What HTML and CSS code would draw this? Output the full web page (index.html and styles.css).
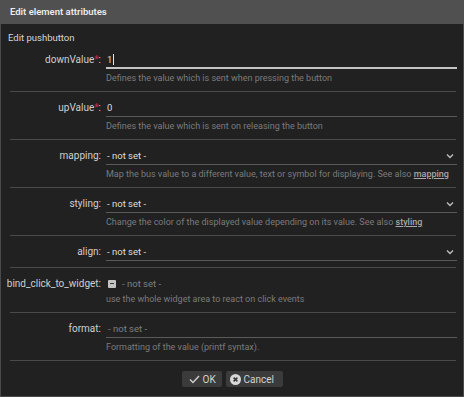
FILE: index.html
```html
<!DOCTYPE html>
<html>
<head>
<meta charset="utf-8">
<link rel="stylesheet" href="styles.css">
</head>
<body>
<div class="dialog">
  <div class="titlebar">Edit element attributes</div>
  <div class="content">
    <div class="heading">Edit pushbutton</div>
    <div class="rows">
      <div class="row">
        <div class="label"><span>downValue<span class="req">*</span>:</span></div>
        <div class="field">
          <div class="input focus"><span class="val">1</span><span class="caret"></span></div>
          <div class="desc">Defines the value which is sent when pressing the button</div>
        </div>
      </div>
      <div class="row">
        <div class="label"><span>upValue<span class="req">*</span>:</span></div>
        <div class="field">
          <div class="input"><span class="val">0</span></div>
          <div class="desc">Defines the value which is sent on releasing the button</div>
        </div>
      </div>
      <div class="row">
        <div class="label"><span>mapping:</span></div>
        <div class="field">
          <div class="input select"><span class="val">- not set -</span><svg class="chev" width="8" height="6" viewBox="0 0 8 6"><polyline points="1,1.5 4,4.5 7,1.5" fill="none" stroke="#bdbdbd" stroke-width="1.4"/></svg></div>
          <div class="desc">Map the bus value to a different value, text or symbol for displaying. See also <span class="link">mapping</span></div>
        </div>
      </div>
      <div class="row">
        <div class="label"><span>styling:</span></div>
        <div class="field">
          <div class="input select"><span class="val">- not set -</span><svg class="chev" width="8" height="6" viewBox="0 0 8 6"><polyline points="1,1.5 4,4.5 7,1.5" fill="none" stroke="#bdbdbd" stroke-width="1.4"/></svg></div>
          <div class="desc">Change the color of the displayed value depending on its value. See also <span class="link">styling</span></div>
        </div>
      </div>
      <div class="row">
        <div class="label"><span>align:</span></div>
        <div class="field">
          <div class="input select"><span class="val">- not set -</span><svg class="chev" width="8" height="6" viewBox="0 0 8 6"><polyline points="1,1.5 4,4.5 7,1.5" fill="none" stroke="#bdbdbd" stroke-width="1.4"/></svg></div>
        </div>
      </div>
      <div class="row">
        <div class="label label-cb"><span>bind_click_to_widget:</span></div>
        <div class="field">
          <div class="checkline"><span class="checkbox"><span class="dash"></span></span><span class="placeholder">- not set -</span></div>
          <div class="desc">use the whole widget area to react on click events</div>
        </div>
      </div>
      <div class="row">
        <div class="label"><span>format:</span></div>
        <div class="field">
          <div class="input"><span class="placeholder indent">- not set -</span></div>
          <div class="desc">Formatting of the value (printf syntax).</div>
        </div>
      </div>
    </div>
    <div class="buttons">
      <button class="btn btn-ok"><svg width="11" height="9" viewBox="0 0 11 9"><polyline points="1,4.5 4,7.5 10,1" fill="none" stroke="#d0d0d0" stroke-width="1.4"/></svg>OK</button>
      <button class="btn btn-cancel"><svg width="11" height="11" viewBox="0 0 11 11"><circle cx="5.5" cy="5.5" r="5.5" fill="#d8d8d8"/><path d="M3.6 3.6 L7.4 7.4 M7.4 3.6 L3.6 7.4" stroke="#3a3a3a" stroke-width="1.5"/></svg>Cancel</button>
    </div>
  </div>
</div>
</body>
</html>
```

FILE: styles.css
```css
* { box-sizing: border-box; }
html, body {
  margin: 0;
  padding: 0;
  background: #212121;
  font-family: Roboto, "Liberation Sans", sans-serif;
}
.dialog {
  width: 464px;
  height: 397px;
  display: flex;
  flex-direction: column;
  background: #212121;
}
.titlebar {
  height: 24px;
  background: #505050;
  color: #ececec;
  font-size: 9.5px;
  font-weight: 600;
  line-height: 24px;
  padding-left: 10px;
  flex: none;
}
.content {
  flex: 1;
  border: 1px solid #4a4a4a;
  border-top: none;
  padding-top: 8px;
}
.heading {
  font-size: 9.5px;
  color: #d6d6d6;
  line-height: 12px;
  padding-left: 7px;
}
.rows {
  margin: 0 7px 0 9px;
}
.row {
  display: grid;
  grid-template-columns: 91px 1fr;
  column-gap: 5px;
  padding: 7px 0 6px;
  border-bottom: 1px solid #4b4b4b;
}
.label {
  display: flex;
  justify-content: flex-end;
  font-size: 10px;
  color: #cfcfcf;
  line-height: 18px;
  white-space: nowrap;
}
.label .req { color: #c2304f; }
.field { min-width: 0; margin-right: -1px; }
.input {
  height: 18px;
  border-bottom: 1px solid #5a5a5a;
  font-size: 9.5px;
  color: #dedede;
  line-height: 17px;
  display: flex;
  align-items: center;
}
.input.focus {
  border-bottom: 2px solid #c4c4c4;
}
.input .val { padding-left: 1px; }
.caret {
  display: inline-block;
  width: 1px;
  height: 11px;
  background: #e6e6e6;
  margin-left: 1px;
}
.select { justify-content: space-between; }
.chev { margin-right: 3px; margin-top: 1px; }
.desc {
  margin-top: 2px;
  font-size: 9px;
  line-height: 14px;
  color: #7b7b7b;
  white-space: nowrap;
}
.link {
  color: #a8a8a8;
  text-decoration: underline;
  font-weight: 500;
}
.checkline {
  height: 17px;
  display: flex;
  align-items: center;
  padding-left: 2px;
}
.checkbox {
  width: 8px;
  height: 8px;
  background: #c4c4c4;
  border-radius: 1px;
  display: flex;
  align-items: center;
  justify-content: center;
  margin-right: 6px;
}
.checkbox .dash {
  width: 4px;
  height: 1.5px;
  background: #3a3a3a;
}
.placeholder { color: #7e7e7e; font-size: 9.5px; }
.placeholder.indent { padding-left: 2px; }
.checkline + .desc { margin-top: 0; }
.buttons {
  display: flex;
  justify-content: center;
  gap: 4px;
  margin-top: 10px;
}
.btn {
  height: 16px;
  border: none;
  border-radius: 2px;
  background: #3b3b3b;
  color: #d2d2d2;
  font-family: Roboto, "Liberation Sans", sans-serif;
  font-size: 10px;
  display: flex;
  align-items: center;
  gap: 3px;
}
.btn-ok { width: 40px; padding: 0 0 0 7px; }
.btn-cancel { width: 57px; padding: 0 0 0 4px; }
```
